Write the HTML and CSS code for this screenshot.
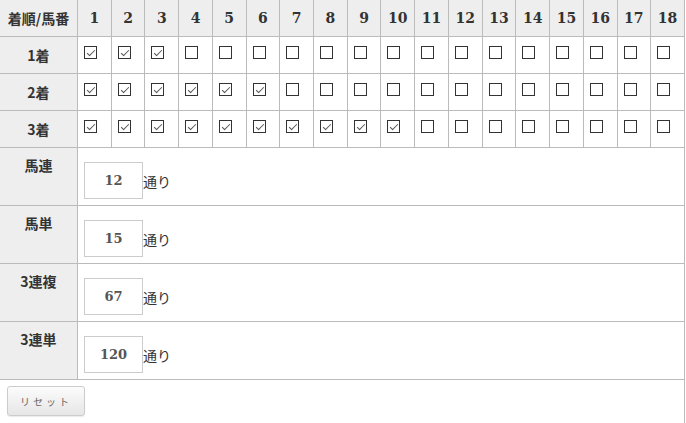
FILE: index.html
```html
<!DOCTYPE html>
<html lang="ja">
<head>
  <meta charset="UTF-8">
  <title>馬券計算</title>
  <link rel="stylesheet" href="styles.css">
</head>
<body>

  <table class="grid">
    <colgroup>
      <col class="col-label">
    </colgroup>
    <thead>
      <tr>
        <th class="label">着順/馬番</th>
        <th class="num">1</th><th class="num">2</th><th class="num">3</th>
        <th class="num">4</th><th class="num">5</th><th class="num">6</th>
        <th class="num">7</th><th class="num">8</th><th class="num">9</th>
        <th class="num">10</th><th class="num">11</th><th class="num">12</th>
        <th class="num">13</th><th class="num">14</th><th class="num">15</th>
        <th class="num">16</th><th class="num">17</th><th class="num">18</th>
      </tr>
    </thead>
    <tbody id="picks">
      <!-- checkbox rows are filled in by the script -->
    </tbody>
    <tbody>
      <tr class="count-row">
        <th class="label">馬連</th>
        <td colspan="18" class="count"><div class="count-line"><input type="text" class="count-box" id="umaren" value="12" readonly>通り</div></td>
      </tr>
      <tr class="count-row">
        <th class="label">馬単</th>
        <td colspan="18" class="count"><div class="count-line"><input type="text" class="count-box" id="umatan" value="15" readonly>通り</div></td>
      </tr>
      <tr class="count-row">
        <th class="label">3連複</th>
        <td colspan="18" class="count"><div class="count-line"><input type="text" class="count-box" id="sanfuku" value="67" readonly>通り</div></td>
      </tr>
      <tr class="count-row">
        <th class="label">3連単</th>
        <td colspan="18" class="count"><div class="count-line"><input type="text" class="count-box" id="santan" value="120" readonly>通り</div></td>
      </tr>
      <tr class="reset-row">
        <td colspan="19"><button class="reset-btn" onclick="resetAll()">リセット</button></td>
      </tr>
    </tbody>
  </table>

  <script>
    // initial state: 1着 = 1-3, 2着 = 1-6, 3着 = 1-10
    const initial = [3, 6, 10];

    function buildRows() {
      const tbody = document.getElementById("picks");
      tbody.innerHTML = "";
      initial.forEach((upto, i) => {
        const row = document.createElement("tr");
        row.className = "pick-row";
        let html = `<th class="label">${i + 1}着</th>`;
        for (let n = 1; n <= 18; n++) {
          html += `<td class="pick"><input type="checkbox" class="box" data-place="${i + 1}" value="${n}"${n <= upto ? " checked" : ""}></td>`;
        }
        row.innerHTML = html;
        tbody.appendChild(row);
      });
    }

    function resetAll() {
      document.querySelectorAll(".box").forEach(cb => cb.checked = false);
      document.querySelectorAll(".count-box").forEach(input => input.value = "0");
    }

    buildRows();
  </script>

</body>
</html>
```

FILE: styles.css
```css
body {
  margin: 0;
  background: #fff;
  color: #333;
  font-family: "Noto Sans CJK JP", "Noto Sans", sans-serif;
  font-size: 14px;
}
.grid {
  width: 686px;
  margin: -1px 0 0 -1px;
  border-collapse: collapse;
  table-layout: fixed;
}
.col-label {
  width: 78px;
}
.grid th, .grid td {
  border: 1px solid #bbb;
  padding: 0;
}
.grid th {
  background: #eee;
}
.label {
  font-weight: bold;
  font-size: 14px;
  text-align: center;
  color: #333;
}
.num {
  font-family: "DejaVu Serif", serif;
  font-weight: bold;
  font-size: 14px;
  color: #333;
  text-align: center;
}
thead th {
  height: 36px;
}
.pick-row th, .pick-row td {
  height: 36px;
}
.pick {
  vertical-align: top;
  padding: 0 0 0 6px !important;
}
.box {
  appearance: none;
  -webkit-appearance: none;
  display: block;
  position: relative;
  width: 13px;
  height: 13px;
  margin: 9px 0 0;
  border: 1px solid #333;
  background: #fff;
  box-sizing: border-box;
}
.box:checked::after {
  content: "";
  position: absolute;
  left: 4px;
  top: 1px;
  width: 3px;
  height: 7px;
  border-right: 1px solid #555;
  border-bottom: 1px solid #555;
  transform: rotate(45deg);
}
.count-row th {
  vertical-align: top;
  padding-top: 7px;
  line-height: 20px;
}
.count {
  vertical-align: top;
  padding: 14px 6px 6px !important;
  background: #fff;
}
.count-line {
  display: flex;
  align-items: center;
  height: 37px;
  line-height: 20px;
  font-size: 14px;
}
.count-box {
  width: 59px;
  height: 37px;
  box-sizing: border-box;
  border: 1px solid #ccc;
  padding: 0;
  margin: 0;
  text-align: center;
  font-family: "DejaVu Serif", serif;
  font-weight: bold;
  font-size: 13px;
  color: #555;
  outline: none;
}
.reset-row td {
  height: 42px;
  padding: 6px 7px 0 !important;
  vertical-align: top;
}
.reset-btn {
  display: block;
  width: 78px;
  height: 30px;
  border: 1px solid #ccc;
  border-radius: 3px;
  background: linear-gradient(#fcfcfc, #e6e6e6);
  box-shadow: 0 1px 1px rgba(0, 0, 0, 0.08);
  color: #666;
  font-family: "Noto Sans CJK JP", sans-serif;
  font-size: 10px;
  letter-spacing: 3px;
  cursor: pointer;
}
```
